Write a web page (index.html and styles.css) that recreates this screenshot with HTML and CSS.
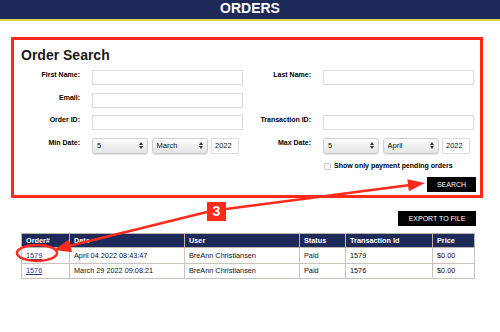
FILE: index.html
```html
<!DOCTYPE html>
<html lang="en">

<head>
    <meta charset="UTF-8">
    <meta name="viewport" content="width=device-width, initial-scale=1.0">
    <title>Orders</title>
    <link rel="stylesheet" href="styles.css">
</head>

<body>
    <header class="top">
        <h1>ORDERS</h1>
    </header>

    <form class="search" action="">
        <h2>Order Search</h2>
        <div class="fields">
            <label class="lbl">First Name:</label>
            <input type="text" class="txt">
            <label class="lbl">Last Name:</label>
            <input type="text" class="txt">

            <label class="lbl">Email:</label>
            <input type="text" class="txt">
            <span></span>
            <span></span>

            <label class="lbl">Order ID:</label>
            <input type="text" class="txt">
            <label class="lbl">Transaction ID:</label>
            <input type="text" class="txt">

            <label class="lbl">Min Date:</label>
            <div class="date">
                <span class="sel"><select><option>5</option></select></span>
                <span class="sel"><select><option>March</option></select></span>
                <input type="text" class="year" value="2022">
            </div>
            <label class="lbl">Max Date:</label>
            <div class="date">
                <span class="sel"><select><option>5</option></select></span>
                <span class="sel"><select><option>April</option></select></span>
                <input type="text" class="year" value="2022">
            </div>

            <label class="check">
                <input type="checkbox">
                <span>Show only payment pending orders</span>
            </label>
        </div>
        <div class="actions">
            <button type="button" class="btn btn-search">SEARCH</button>
        </div>
    </form>

    <div class="export">
        <button type="button" class="btn btn-export">EXPORT TO FILE</button>
    </div>

    <table class="orders">
        <colgroup>
            <col style="width:48px">
            <col style="width:115px">
            <col style="width:115px">
            <col style="width:46px">
            <col style="width:87px">
            <col>
        </colgroup>
        <thead>
            <tr>
                <th>Order#</th>
                <th>Date</th>
                <th>User</th>
                <th>Status</th>
                <th>Transaction Id</th>
                <th>Price</th>
            </tr>
        </thead>
        <tbody>
            <tr>
                <td><a href="#">1579</a></td>
                <td>April 04 2022 08:43:47</td>
                <td>BreAnn Christiansen</td>
                <td>Paid</td>
                <td>1579</td>
                <td>$0.00</td>
            </tr>
            <tr>
                <td><a href="#">1576</a></td>
                <td>March 29 2022 09:08:21</td>
                <td>BreAnn Christiansen</td>
                <td>Paid</td>
                <td>1576</td>
                <td>$0.00</td>
            </tr>
        </tbody>
    </table>

    <!-- red callout drawn over the page: arrows from the step badge -->
    <svg class="marks" width="500" height="332" viewBox="0 0 500 332">
        <line x1="226" y1="209" x2="410" y2="185" stroke="#ff2a1c" stroke-width="2.5" />
        <polygon points="425,183 408.9,191.2 407.3,179.3" fill="#ff2a1c" />
        <line x1="207" y1="212" x2="69" y2="246" stroke="#ff2a1c" stroke-width="2.5" />
        <polygon points="54,250 72.1,252.2 68.9,239.6" fill="#ff2a1c" />
        <ellipse cx="37" cy="253" rx="20" ry="8" fill="none" stroke="#ff2a1c" stroke-width="2.5" />
    </svg>
    <div class="badge">3</div>
</body>

</html>
```

FILE: styles.css
```css
* {
    box-sizing: border-box;
    padding: 0;
    margin: 0;
}

body {
    position: relative;
    width: 500px;
    height: 332px;
    font-family: "Liberation Sans", Arial, sans-serif;
    color: #111;
    background: #fff;
    overflow: hidden;
}

.top {
    height: 21px;
    background-color: #1e2a5a;
    border-bottom: 2px solid #d9d641;
    text-align: center;
}

.top h1 {
    font-size: 14px;
    line-height: 17px;
    font-weight: bold;
    color: #fff;
}

.search {
    margin: 16px 17px 0 11px;
    border: 3px solid #ff2a1c;
    padding: 6px 0 3px 0;
}

.search h2 {
    margin-left: 7px;
    font-size: 14px;
    line-height: 18px;
    font-weight: bold;
    color: #1a1a1a;
}

.fields {
    display: grid;
    grid-template-columns: 78px 151px 80px 151px;
    grid-template-rows: 15px 15px 15px 16px 9px;
    row-gap: 7.5px;
    align-items: start;
    margin-top: 6px;
}

.lbl {
    text-align: right;
    padding-right: 12px;
    font-size: 7px;
    line-height: 9px;
    font-weight: bold;
    color: #000;
}

.txt {
    width: 151px;
    height: 15px;
    border: 1px solid #dcdcdc;
    outline: none;
}

.date {
    display: flex;
    gap: 3.5px;
    height: 16px;
}

.sel {
    position: relative;
    display: block;
    width: 56px;
    height: 16px;
}

.sel select {
    appearance: none;
    -webkit-appearance: none;
    display: block;
    width: 100%;
    height: 16px;
    padding: 0 4px;
    line-height: 14px;
    border: 1px solid #cfcfcf;
    border-radius: 3px;
    background: linear-gradient(#fdfdfd, #e4e4e4);
    box-shadow: 0 1px 1px rgba(0, 0, 0, 0.12);
    font-family: "Liberation Sans", Arial, sans-serif;
    font-size: 7.5px;
    color: #111;
}

/* up / down arrows of the select */
.sel::before,
.sel::after {
    content: "";
    position: absolute;
    right: 5px;
    border-left: 2px solid transparent;
    border-right: 2px solid transparent;
}

.sel::before {
    top: 4px;
    border-bottom: 3px solid #333;
}

.sel::after {
    top: 8px;
    border-top: 3px solid #333;
}

.year {
    display: block;
    width: 28px;
    height: 16px;
    padding: 0 3px;
    border: 1px solid #dcdcdc;
    font-family: "Liberation Sans", Arial, sans-serif;
    font-size: 7.5px;
    color: #111;
}

.check {
    grid-column: 4;
    display: flex;
    align-items: center;
    height: 9px;
    font-size: 7px;
    line-height: 9px;
    font-weight: bold;
    color: #000;
}

.check input {
    appearance: none;
    -webkit-appearance: none;
    flex: none;
    width: 7px;
    height: 7px;
    margin: 2px 3px 0 1px;
    border: 1px solid #cccccc;
    border-radius: 2px;
    background: #fafafa;
}

.actions {
    margin-top: 7px;
    text-align: right;
    padding-right: 4px;
    height: 15px;
}

.btn {
    display: inline-block;
    vertical-align: top;
    height: 15px;
    border: 0;
    background-color: #000;
    color: #fff;
    font-family: "Liberation Sans", Arial, sans-serif;
    font-size: 7px;
    cursor: pointer;
}

.btn-search {
    width: 49px;
}

.export {
    margin-top: 13px;
    padding-right: 24px;
    text-align: right;
    height: 15px;
}

.btn-export {
    width: 78px;
}

.orders {
    margin: 7px 0 0 21px;
    width: 454px;
    table-layout: fixed;
    border-collapse: collapse;
    border: 1.5px solid #b9b3ac;
    font-size: 7.3px;
}

.orders th {
    height: 14px;
    padding: 0 4px;
    background-color: #1e2a5a;
    color: #fff;
    text-align: left;
    font-weight: bold;
    border: 1px solid #b9b3ac;
}

.orders td {
    height: 15.5px;
    padding: 0 4px;
    border: 1px solid #c8c3bc;
    color: #111;
    white-space: nowrap;
}

.orders a {
    color: #2b3a8c;
}

.marks {
    position: absolute;
    top: 0;
    left: 0;
    pointer-events: none;
}

.badge {
    position: absolute;
    left: 207px;
    top: 202px;
    width: 19px;
    height: 19px;
    background-color: #ff2a1c;
    color: #fff;
    font-size: 14px;
    line-height: 19px;
    font-weight: bold;
    text-align: center;
}
```
